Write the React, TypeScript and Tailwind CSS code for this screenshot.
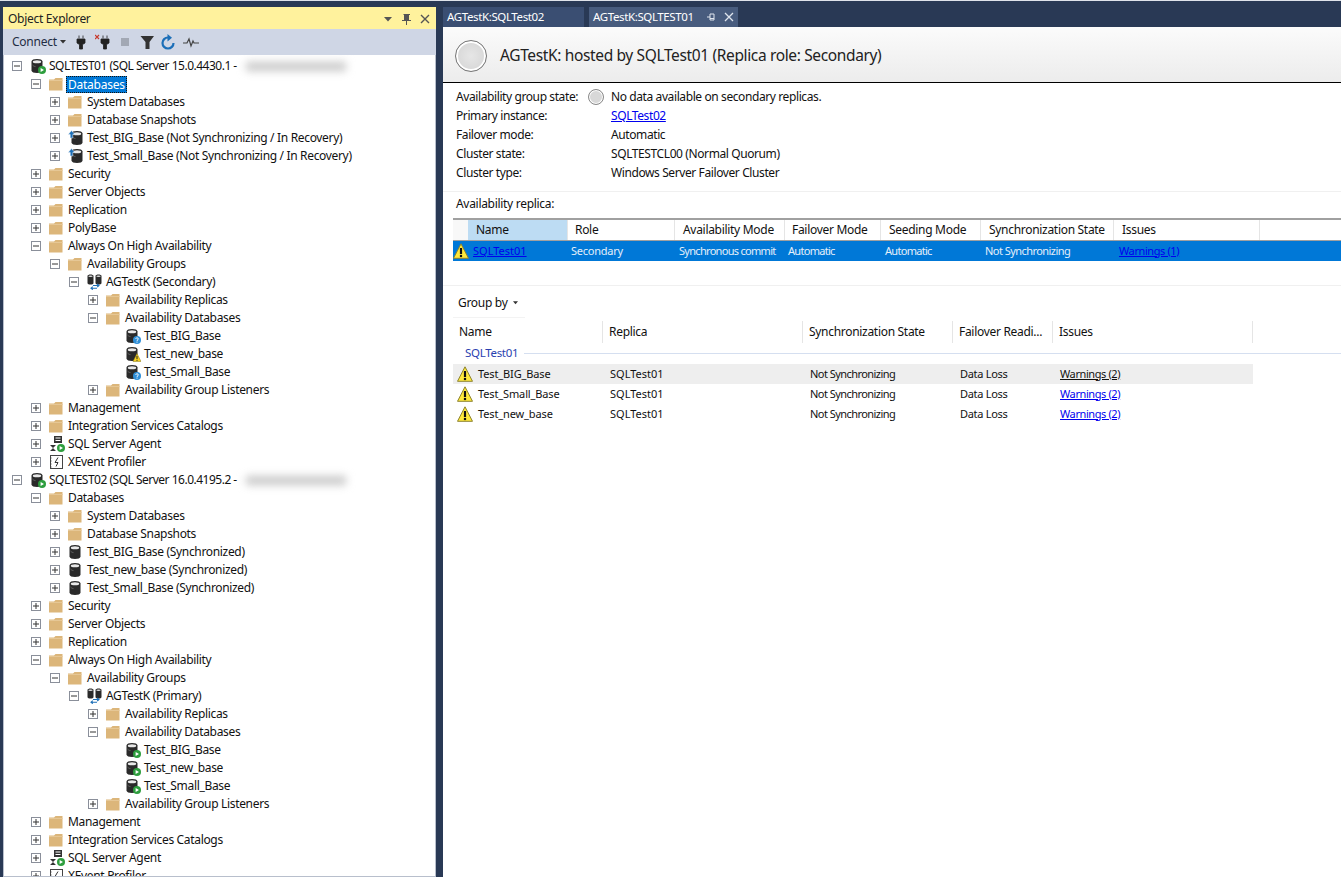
import React from "react";

type Ic = "server" | "folder" | "restoring" | "ag" | "dbq" | "dbw" | "dbg" | "db" | "agent" | "xe" | "none";
type Row = [number, "+" | "-" | "", Ic, string, string?];

function serverRows(name: string, ver: string, prim: boolean): Row[] {
  const s: Row[] = prim
    ? [
        [2, "+", "restoring", "Test_BIG_Base (Not Synchronizing / In Recovery)"],
        [2, "+", "restoring", "Test_Small_Base (Not Synchronizing / In Recovery)"],
      ]
    : [
        [2, "+", "db", "Test_BIG_Base (Synchronized)"],
        [2, "+", "db", "Test_new_base (Synchronized)"],
        [2, "+", "db", "Test_Small_Base (Synchronized)"],
      ];
  const dbs: Row[] = prim
    ? [
        [5, "", "dbq", "Test_BIG_Base"],
        [5, "", "dbw", "Test_new_base"],
        [5, "", "dbq", "Test_Small_Base"],
      ]
    : [
        [5, "", "dbg", "Test_BIG_Base"],
        [5, "", "dbg", "Test_new_base"],
        [5, "", "dbg", "Test_Small_Base"],
      ];
  return [
    [0, "-", "server", `${name} (SQL Server ${ver} -`, "blur"],
    [1, "-", "folder", "Databases", prim ? "sel" : undefined],
    [2, "+", "folder", "System Databases"],
    [2, "+", "folder", "Database Snapshots"],
    ...s,
    [1, "+", "folder", "Security"],
    [1, "+", "folder", "Server Objects"],
    [1, "+", "folder", "Replication"],
    ...(prim ? ([[1, "+", "folder", "PolyBase"]] as Row[]) : []),
    [1, "-", "folder", "Always On High Availability"],
    [2, "-", "folder", "Availability Groups"],
    [3, "-", "ag", prim ? "AGTestK (Secondary)" : "AGTestK (Primary)"],
    [4, "+", "folder", "Availability Replicas"],
    [4, "-", "folder", "Availability Databases"],
    ...dbs,
    [4, "+", "folder", "Availability Group Listeners"],
    [1, "+", "folder", "Management"],
    [1, "+", "folder", "Integration Services Catalogs"],
    [1, "+", "agent", "SQL Server Agent"],
    [1, "+", "xe", "XEvent Profiler"],
  ];
}

const rows: Row[] = [
  ...serverRows("SQLTEST01", "15.0.4430.1", true),
  ...serverRows("SQLTEST02", "16.0.4195.2", false),
];

function Cyl({ fill = "#2a2a2a" }: { fill?: string }) {
  return (
    <>
      <path d="M1.500 3.500C1.500 1.800 4 1 7 1s5.500.8 5.500 2.500v9c0 1.700-2.500 2.500-5.500 2.500s-5.500-.8-5.500-2.500z" fill={fill} />
      <ellipse cx="7" cy="3.800" rx="4.200" ry="1.500" fill="#e8e8e8" />
      <path d="M2.500 7c1 1.200 2 1.500 3 1.600" stroke="#777" strokeWidth=".7" fill="none" />
    </>
  );
}

function Play() {
  return (
    <>
      <circle cx="12" cy="12" r="4" fill="#2e9e3e" />
      <path d="M10.600 9.900v4.200l3.400-2.100z" fill="#fff" />
    </>
  );
}

function NodeIcon({ k }: { k: Ic }) {
  const c = "w-4 h-4 shrink-0";
  switch (k) {
    case "folder":
      return (
        <svg viewBox="0 0 16 16" className={c}>
          <path d="M0 3.500h5l1.500-1.500H13.500v12.500H0z" fill="#dcb67a" />
          <path d="M0 4.500h13.500" stroke="#e6c795" strokeWidth="1" />
        </svg>
      );
    case "server":
    case "dbg":
      return (
        <svg viewBox="0 0 16 16" className={c}>
          <Cyl />
          <Play />
        </svg>
      );
    case "db":
      return (
        <svg viewBox="0 0 16 16" className={c}>
          <Cyl />
        </svg>
      );
    case "restoring":
      return (
        <svg viewBox="0 0 16 16" className={c}>
          <g transform="translate(2 0)">
            <Cyl />
          </g>
          <path d="M3.500 .6 .2 4.400h2v3.600h2.600V4.400h2z" fill="#1c6fb8" stroke="#fff" strokeWidth=".5" />
        </svg>
      );
    case "dbq":
      return (
        <svg viewBox="0 0 16 16" className={c}>
          <Cyl />
          <circle cx="12" cy="12" r="4" fill="#2f8fd8" />
          <path d="M10.700 10.700c.3-1.300 2.700-1.100 2.600.2 0 1-1.300.9-1.300 2" stroke="#fff" strokeWidth="1" fill="none" />
          <rect x="11.500" y="13.600" width="1" height="1" fill="#fff" />
        </svg>
      );
    case "dbw":
      return (
        <svg viewBox="0 0 16 16" className={c}>
          <Cyl />
          <path d="M12 7.500 16 15.500H8z" fill="#f6d21f" stroke="#8a7a20" strokeWidth=".5" />
          <path d="M12 10v3M12 13.800v1" stroke="#222" strokeWidth="1" />
        </svg>
      );
    case "ag":
      return (
        <svg viewBox="0 0 16 16" className={c}>
          <path d="M.5 2C.5 1 2 .5 3.500.5S6.500 1 6.500 2v7c0 1-1.500 1.500-3 1.500S.5 10 .5 9z" fill="#2a2a2a" />
          <path d="M8.500 2c0-1 1.500-1.500 3-1.500s3 .5 3 1.500v7c0 1-1.500 1.500-3 1.500s-3-.5-3-1.500z" fill="#2a2a2a" />
          <ellipse cx="3.500" cy="2.200" rx="2.200" ry=".8" fill="#ddd" />
          <ellipse cx="11.500" cy="2.200" rx="2.200" ry=".8" fill="#ddd" />
          <path d="M6 11.500h6M10.200 10l1.800 1.500-1.800 1.500" stroke="#1c6fb8" strokeWidth="1.100" fill="none" />
          <path d="M10 14.200H4M5.800 12.700 4 14.200l1.800 1.500" stroke="#1c6fb8" strokeWidth="1.100" fill="none" />
        </svg>
      );
    case "agent":
      return (
        <svg viewBox="0 0 16 16" className={c}>
          <rect x="5" y="0" width="8" height="7" fill="#333" />
          <path d="M6.500 2h5M6.500 4.500h5" stroke="#fff" strokeWidth="1" />
          <path d="M1 9h6L1 15h6z" fill="#333" />
          <Play />
        </svg>
      );
    case "xe":
      return (
        <svg viewBox="0 0 16 16" className={c}>
          <rect x="1.500" y="1.500" width="12" height="13" fill="#fff" stroke="#444" />
          <path d="M1.500 4h1M1.500 7h1M1.500 10h1M1.500 13h1" stroke="#444" />
          <path d="M9 3.500 6 8.500h3l-2 4" stroke="#333" strokeWidth="1" fill="none" />
        </svg>
      );
    default:
      return <span className={c} />;
  }
}

function Toggle({ t }: { t: "+" | "-" | "" }) {
  if (!t) return <span className="w-[10px] h-[10px] shrink-0" />;
  return (
    <svg viewBox="0 0 10 10" className="w-[10px] h-[10px] shrink-0">
      <rect x=".5" y=".5" width="9" height="9" fill="#fff" stroke="#8a8f9a" />
      <path d="M2 5h6" stroke="#333" />
      {t === "+" && <path d="M5 2v6" stroke="#333" />}
    </svg>
  );
}

function TreeRow({ r }: { r: Row }) {
  const [d, t, ic, label, extra] = r;
  return (
    <div className="h-[18px] flex items-center whitespace-nowrap tracking-[-0.33px]" style={{ paddingLeft: 8 + 19 * d }}>
      {d === 5 ? <span className="w-[10px] shrink-0" /> : <Toggle t={t} />}
      <span className="w-2 shrink-0" />
      <NodeIcon k={ic} />
      {extra === "sel" ? (
        <span className="ml-px px-px h-[17px] leading-[15px] bg-[#0078d7] text-white border border-dotted border-[#111] tracking-[-0.25px]">{label}</span>
      ) : extra === "blur" ? (
        <span className="ml-[3px] text-[#111] tracking-[-0.5px]">{label}</span>
      ) : (
        <span className="ml-[3px] text-[#111]">{label}</span>
      )}
      {extra === "blur" && <span className="ml-[9px] w-[100px] h-[9px] bg-[#c8c8c8] blur-[4px]" />}
    </div>
  );
}

function Warn() {
  return (
    <svg viewBox="0 0 16 16" width={16} height={16} className="shrink-0">
      <path d="M8 .8 15.500 15.300H.5z" fill="#ffe93b" stroke="#8d8330" strokeWidth="1" strokeLinejoin="round" />
      <path d="M8 5v6" stroke="#111" strokeWidth="2.200" />
      <rect x="6.900" y="11.900" width="2.200" height="2.200" fill="#111" />
    </svg>
  );
}

const replicaCols = [
  ["Name", 100, "pl-[8px] bg-[#bddcf3]"],
  ["Role", 107, "pl-[7px]"],
  ["Availability Mode", 110, "pl-[8px]"],
  ["Failover Mode", 96, "pl-[7px]"],
  ["Seeding Mode", 100, "pl-[8px]"],
  ["Synchronization State", 133, "pl-[8px]"],
  ["Issues", 146, "pl-[8px]"],
] as const;

const dbCols = [
  ["Name", 150],
  ["Replica", 200],
  ["Synchronization State", 150],
  ["Failover Readi...", 100],
  ["Issues", 200],
] as const;

const details = [
  ["Primary instance:", "SQLTest02"],
  ["Failover mode:", "Automatic"],
  ["Cluster state:", "SQLTESTCL00 (Normal Quorum)"],
  ["Cluster type:", "Windows Server Failover Cluster"],
];

export default function App() {
  return (
    <div className="w-[1341px] h-[877px] overflow-hidden bg-[#293955] flex flex-col font-['Noto_Sans','Open_Sans',sans-serif] text-[12px] tracking-[-0.3px] text-[#111]">
      <div className="h-px bg-[#dfe3ea]" />
      <div className="h-[876px] flex pt-[6px] pl-[3px]">
        {/* Object Explorer */}
        <div className="w-[433px] flex flex-col shrink-0">
          <div className="h-[22px] bg-[#fff29d] flex items-center pl-[5px] pr-[3px] pt-px text-[#222]">
            <span className="flex-1">Object Explorer</span>
            <svg viewBox="0 0 50 14" className="w-[50px] h-[14px]">
              <path d="M1 5h8L5 9.500z" fill="#555" />
              <path d="M21 2h6v1h-1v5h2v1h-4v4h-1V9h-4V8h2V3h-1z" fill="#555" />
              <path d="M38 3l8 8M46 3l-8 8" stroke="#555" strokeWidth="1.400" />
            </svg>
          </div>
          <div className="h-[26px] bg-[#cfd6e5] flex items-center pl-[9px] text-[#1f2d44]">
            <span className="tracking-[-0.25px]">Connect</span>
            <svg viewBox="0 0 6 4" className="w-[6px] h-1 ml-[3px]"><path d="M0 0h6L3 3.500z" fill="#333" /></svg>
            <div className="ml-[7px] flex gap-[6px]">
              <svg viewBox="0 0 16 16" className="w-4 h-4"><path d="M6 1.500v3M10 1.500v3M4 5h8v4l-2.500 1.500V15h-3v-4.500L4 9z" fill="#222" stroke="#222" strokeWidth=".8" /></svg>
              <svg viewBox="0 0 16 16" className="w-4 h-4"><path d="M8 1.500v3M12 1.500v3M6 5h8v4l-2.500 1.500V15h-3v-4.500L6 9z" fill="#222" stroke="#222" strokeWidth=".8" /><path d="M0 1l4 4M4 1 0 5" stroke="#c8392b" strokeWidth="1.200" /></svg>
              <svg viewBox="0 0 16 16" className="w-4 h-4"><rect x="4" y="4" width="8" height="8" fill="#a2a8b4" /></svg>
              <svg viewBox="0 0 16 16" className="w-4 h-4"><path d="M1.500 2h13.500L10.500 8v7h-4V8z" fill="#333" /></svg>
              <svg viewBox="0 0 16 16" className="w-4 h-4"><path d="M12.500 9A5.500 5.500 0 1 1 7 3.500" stroke="#1c6fb8" strokeWidth="2.200" fill="none" /><path d="M6.500 0v7.500L11 3.800z" fill="#1c6fb8" /></svg>
              <svg viewBox="0 0 16 16" className="w-4 h-4"><path d="M0 9h4l2-4 2 7 2-5 1 2h5" stroke="#444" strokeWidth="1.200" fill="none" /></svg>
            </div>
          </div>
          <div className="flex-1 bg-white border border-t-0 border-[#b8bfcc] pt-[2px] overflow-hidden">
            {rows.map((r, i) => (
              <TreeRow key={i} r={r} />
            ))}
          </div>
        </div>
        {/* Document well */}
        <div className="ml-[7px] flex-1 flex flex-col min-w-0">
          <div className="h-[20px] flex text-white text-[11.5px] tracking-[-0.38px]">
            <div className="w-[141px] bg-[#3a4e72] flex items-center pl-[4px]">AGTestK:SQLTest02</div>
            <div className="w-[5px]" />
            <div className="w-[149px] bg-[#485c7e] flex items-center pl-[4px]">
              <span className="flex-1">AGTestK:SQLTEST01</span>
              <svg viewBox="0 0 12 12" className="w-3 h-3 mr-[6px]"><path d="M2 6h3M5 3h4v6H5zM5 7.500h4" stroke="#dfe5ee" fill="none" /></svg>
              <svg viewBox="0 0 12 12" className="w-3 h-3 mr-[3px]"><path d="M2 2l8 8M10 2l-8 8" stroke="#dfe5ee" strokeWidth="1.300" /></svg>
            </div>
          </div>
          <div className="flex-1 bg-white flex flex-col">
            <div className="h-[56px] shrink-0 flex items-center pl-[12px] gap-[13px] pt-[3px] border-b border-black bg-gradient-to-b from-[#fbfbfb] to-[#ececec]">
              <span className="block w-[32px] h-[32px] rounded-full border border-[#777] shadow-[inset_0_0_0_2px_#fff] bg-[radial-gradient(circle,#e6e6e6,#d2d2d2)] shrink-0" />
              <span className="text-[15.500px] tracking-[-0.36px] text-[#222]">AGTestK: hosted by SQLTest01 (Replica role: Secondary)</span>
            </div>
            {/* Details */}
            <div className="pl-[13px] pt-[4px] pb-[9px] border-b border-[#f0f0f0] tracking-[-0.4px]">
              <div className="h-[19px] flex items-center">
                <span className="w-[132px]">Availability group state:</span>
                <span className="block w-4 h-4 shrink-0 rounded-full border border-[#8a8a8a] shadow-[inset_0_0_0_1px_#fff] bg-[#d8d8d8]" />
                <span className="ml-[7px]">No data available on secondary replicas.</span>
              </div>
              {details.map(([k, v], i) => (
                <div key={k} className="h-[19px] flex items-center">
                  <span className="w-[155px]">{k}</span>
                  {i === 0 ? <span className="text-[#0000ee] underline">{v}</span> : <span>{v}</span>}
                </div>
              ))}
            </div>
            <div className="pl-[13px] h-[26px] pb-[2px] flex items-center">Availability replica:</div>
            {/* Replica grid */}
            <div className="ml-[10px] border-t-2 border-[#a0a0a0] h-[22px] flex bg-white">
              <div className="w-[15px] bg-[#f8f8f8]" />
              {replicaCols.map(([n, w, c]) => (
                <div key={n} className={`flex items-center border-r border-[#e5e5e5] ${c}`} style={{ width: w }}>{n}</div>
              ))}
            </div>
            <div className="ml-[10px] h-[21px] border-t border-[#a0a0a0] bg-[#0078d7] text-[#e4effa] text-[11px] flex items-center whitespace-nowrap">
              <span className="w-[20px]"><Warn /></span>
              <span className="w-[98px] text-[#0000ee] underline tracking-[0px]">SQLTest01</span>
              <span className="w-[108px] tracking-[-0.25px]">Secondary</span>
              <span className="w-[109px] tracking-[-0.7px]">Synchronous commit</span>
              <span className="w-[97px] tracking-[-0.7px]">Automatic</span>
              <span className="w-[100px] tracking-[-0.7px]">Automatic</span>
              <span className="w-[134px] tracking-[-0.55px]">Not Synchronizing</span>
              <span className="text-[#0000ee] underline tracking-[-0.4px]">Warnings (1)</span>
            </div>
            <div className="h-[25px] border-b border-[#f0f0f0]" />
            {/* Group by */}
            <div className="ml-[15px] h-[31px] pt-[2px] flex items-center gap-[5px]">
              <span>Group by</span>
              <svg viewBox="0 0 6 4" className="w-[5px] h-1"><path d="M0 0h6L3 3.500z" fill="#333" /></svg>
            </div>
            <div className="ml-[10px] w-[72px] h-px bg-[#f3f3f3]" />
            <div className="ml-[10px] h-[26px] pt-[3px] pb-px flex">
              {dbCols.map(([n, w]) => (
                <div key={n} className="flex items-center border-r border-[#e5e5e5] pl-[6px] whitespace-nowrap" style={{ width: w }}>{n}</div>
              ))}
            </div>
            <div className="ml-[22px] h-[18px] flex items-center gap-[6px] text-[#2a3fb0] text-[11.500px]">
              <span>SQLTest01</span>
              <span className="flex-1 h-px bg-[#d5dff0]" />
            </div>
            <div className="mt-[2px] ml-[10px] w-[800px] text-[11px] whitespace-nowrap">
              {["Test_BIG_Base", "Test_Small_Base", "Test_new_base"].map((n, i) => (
                <div key={n} className={`h-[20px] flex items-center ${i === 0 ? "bg-[#eeeeee]" : ""}`}>
                  <span className="w-[25px] pl-[4px]"><Warn /></span>
                  <span className="w-[132px] tracking-[-0.13px]">{n}</span>
                  <span className="w-[200px] tracking-[0px]">SQLTest01</span>
                  <span className="w-[150px] tracking-[-0.55px]">Not Synchronizing</span>
                  <span className="w-[100px] tracking-[-0.3px]">Data Loss</span>
                  <span className={`underline tracking-[-0.4px] ${i === 0 ? "text-[#111]" : "text-[#0000ee]"}`}>Warnings (2)</span>
                </div>
              ))}
            </div>
          </div>
        </div>
      </div>
    </div>
  );
}
